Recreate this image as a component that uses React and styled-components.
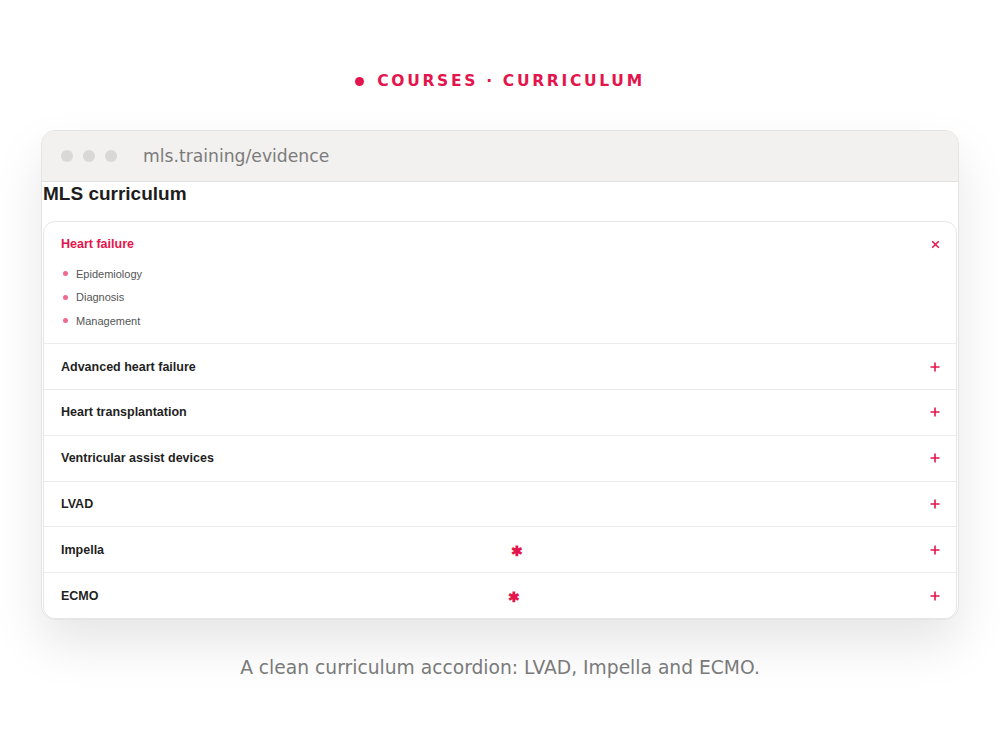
import React from 'react';
import styled, { createGlobalStyle } from 'styled-components';

const GlobalStyle = createGlobalStyle`
  body {
    margin: 0;
    padding: 0;
    background: #ffffff;
    font-family: 'Liberation Sans', Arial, sans-serif;
  }
`;

const Page = styled.div`
  width: 1000px;
  height: 750px;
  display: flex;
  flex-direction: column;
  align-items: center;
  padding-top: 71px;
  box-sizing: border-box;
  background: #ffffff;
`;

const Eyebrow = styled.div`
  display: flex;
  align-items: center;
  gap: 13px;
  height: 20px;
  font-family: 'DejaVu Sans', sans-serif;
  font-weight: 700;
  font-size: 15.5px;
  letter-spacing: 2.7px;
  color: #e3154c;
`;

const Dot = styled.span`
  width: 9px;
  height: 9px;
  border-radius: 50%;
  background: #e3154c;
`;

const Window = styled.div`
  margin-top: 39px;
  width: 918px;
  height: 490px;
  box-sizing: border-box;
  border: 1px solid #e4e4e4;
  border-radius: 14px;
  background: #fff;
  overflow: hidden;
  box-shadow: 0 24px 50px rgba(0, 0, 0, 0.1);
  display: flex;
  flex-direction: column;
`;

const TitleBar = styled.div`
  height: 50px;
  flex: none;
  display: flex;
  align-items: center;
  padding-left: 19px;
  background: #f2f1ef;
  border-bottom: 1px solid #e2e1df;
`;

const Light = styled.span`
  width: 12px;
  height: 12px;
  border-radius: 50%;
  background: #d9d8d6;
  margin-right: 10px;
`;

const Url = styled.span`
  margin-left: 16px;
  font-family: 'DejaVu Sans', sans-serif;
  font-size: 17.2px;
  color: #7b7b7b;
`;

const Content = styled.div`
  padding: 0 1px;
`;

const Heading = styled.h2`
  margin: 1px 0 16px;
  font-size: 19px;
  line-height: 22px;
  font-weight: 700;
  color: #1d1d1d;
`;

const Card = styled.div`
  border: 1px solid #e6e6e6;
  border-radius: 12px;
  overflow: hidden;
`;

const Item = styled.div`
  & + & {
    border-top: 1px solid #ececec;
  }
`;

const Header = styled.div`
  height: 44.8px;
  display: grid;
  grid-template-columns: 449px 1fr 20px;
  align-items: center;
  padding: 0 16px 0 17px;
`;

const Title = styled.span`
  font-size: 12.5px;
  font-weight: 700;
  color: ${p => (p.$open ? '#e3154c' : '#1f1f1f')};
`;

const Marker = styled.span`
  margin-left: ${p => p.$shift}px;
  color: #e3154c;
  font-size: 14px;
  font-weight: 700;
  line-height: 1;
  transform: translateY(1px);
`;

const Toggle = styled.span`
  justify-self: end;
  display: flex;
`;

const List = styled.ul`
  list-style: none;
  margin: -5px 0 0;
  padding: 0 18px 11px 19px;
`;

const Sub = styled.li`
  display: flex;
  align-items: center;
  height: 23.5px;
  font-size: 11px;
  color: #555;
  &::before {
    content: '';
    width: 5px;
    height: 5px;
    border-radius: 50%;
    background: #ef6b90;
    margin-right: 8px;
  }
`;

const Caption = styled.p`
  margin: 37px 0 0;
  font-family: 'DejaVu Sans', sans-serif;
  font-size: 18.7px;
  color: #7a7a7a;
`;

const Plus = () => (
  <svg width="10" height="10" viewBox="0 0 10 10">
    <path d="M5 0.5v9M0.5 5h9" stroke="#e3154c" strokeWidth="1.6" />
  </svg>
);

const Cross = () => (
  <svg width="9" height="9" viewBox="0 0 9 9">
    <path d="M1.2 1.2l6.6 6.6M7.8 1.2l-6.6 6.6" stroke="#e3154c" strokeWidth="1.5" />
  </svg>
);

const sections = [
  { title: 'Heart failure', open: true, items: ['Epidemiology', 'Diagnosis', 'Management'] },
  { title: 'Advanced heart failure' },
  { title: 'Heart transplantation' },
  { title: 'Ventricular assist devices' },
  { title: 'LVAD' },
  { title: 'Impella', mark: 1 },
  { title: 'ECMO', mark: -2 },
];

export default function App() {
  return (
    <>
      <GlobalStyle />
      <Page>
        <Eyebrow>
          <Dot />
          <span>COURSES · CURRICULUM</span>
        </Eyebrow>
        <Window>
          <TitleBar>
            <Light />
            <Light />
            <Light />
            <Url>mls.training/evidence</Url>
          </TitleBar>
          <Content>
            <Heading>MLS curriculum</Heading>
            <Card>
              {sections.map(s => (
                <Item key={s.title}>
                  <Header>
                    <Title $open={s.open}>{s.title}</Title>
                    {s.mark !== undefined ? <Marker $shift={s.mark}>✱</Marker> : <span />}
                    <Toggle>{s.open ? <Cross /> : <Plus />}</Toggle>
                  </Header>
                  {s.open && (
                    <List>
                      {s.items.map(i => (
                        <Sub key={i}>{i}</Sub>
                      ))}
                    </List>
                  )}
                </Item>
              ))}
            </Card>
          </Content>
        </Window>
        <Caption>A clean curriculum accordion: LVAD, Impella and ECMO.</Caption>
      </Page>
    </>
  );
}
